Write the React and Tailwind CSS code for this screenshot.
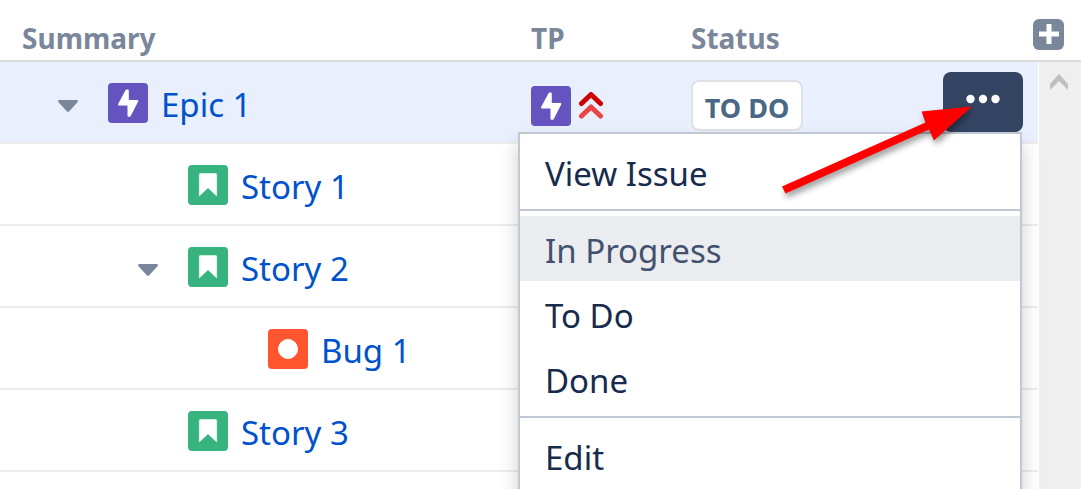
import { useState } from "react";
import clsx from "clsx";

const issues = [
  { id: 1, type: "epic", title: "Epic 1", level: 0, expandable: true, status: "TO DO" },
  { id: 2, type: "story", title: "Story 1", level: 1 },
  { id: 3, type: "story", title: "Story 2", level: 1, expandable: true },
  { id: 4, type: "bug", title: "Bug 1", level: 2 },
  { id: 5, type: "story", title: "Story 3", level: 1 },
];

const menuGroups = [["View Issue"], ["In Progress", "To Do", "Done"], ["Edit"]];

const indents = ["pl-[58px]", "pl-[138px]", "pl-[218px]"];

const typeColors = {
  epic: "bg-[#6554c0]",
  story: "bg-[#36b37e]",
  bug: "bg-[#ff5630]",
};

function TypeIcon({ type }) {
  return (
    <span className={clsx("block size-10 shrink-0 rounded-sm", typeColors[type])}>
      <svg viewBox="0 0 40 40" className="size-10" fill="#fff" stroke="#fff" strokeLinejoin="round">
        {type === "epic" && <path strokeWidth="2" d="M18.5 7.5 11 21.5h9.5v11.2h1.2L29.3 18H19.8V7.5z" />}
        {type === "story" && <path strokeWidth="0.5" d="M12.3 8.5h15.4a1 1 0 0 1 1 1V31L20 22.8 11.3 31V9.5a1 1 0 0 1 1-1z" />}
        {type === "bug" && <circle cx="20" cy="20" r="9.5" strokeWidth="1" />}
      </svg>
    </span>
  );
}

function PriorityIcon() {
  return (
    <svg viewBox="0 0 24 28" className="h-7 w-6" fill="none" strokeWidth="5" strokeLinecap="round" strokeLinejoin="round" role="img" aria-label="Highest priority">
      <path stroke="#ea4444" d="M2.5 24 12 15l9.5 9" />
      <path stroke="#ce0000" d="M2.5 11.5 12 2.5l9.5 9" />
    </svg>
  );
}

function Caret() {
  return (
    <svg viewBox="0 0 20 12" className="h-3 w-5" fill="#7a869a">
      <path d="M1.5 0h17c1.3 0 2 1.3 1 2.3L11 11.4c-.6.6-1.4.6-2 0L.5 2.3C-.5 1.3.2 0 1.5 0z" />
    </svg>
  );
}

function PointerArrow() {
  return (
    <svg
      viewBox="0 0 210 110"
      className="pointer-events-none absolute top-7 -left-[168px] z-20 h-[110px] w-[210px] max-w-none drop-shadow-[2px_4px_3px_rgba(0,0,0,0.4)]"
      fill="#f00"
      aria-hidden="true"
    >
      <path d="M7 86.5 150.5 22.5 146.5 11.5 197 6.5 159 40.5 154 29.5 10.5 93.5z" />
    </svg>
  );
}

function ActionMenu() {
  const [active, setActive] = useState("In Progress");

  return (
    <div
      role="menu"
      className="absolute top-full right-px z-10 w-[504px] border-2 border-[#c1c7d3] bg-white pb-10 shadow-[0_12px_18px_rgba(0,0,0,0.2)]"
    >
      {menuGroups.map((group, index) => (
        <div key={group[0]} role="group" className={clsx("py-[5px]", index > 0 && "border-t-2 border-[#c1c7d3]")}>
          {group.map((label) => (
            <button
              key={label}
              type="button"
              role="menuitem"
              onMouseEnter={() => setActive(label)}
              className={clsx(
                "block h-[65px] w-full px-[25px] pt-1 text-left text-[33px] leading-[61px]",
                label === active ? "bg-[#ebecf0] text-[#42526e]" : "text-[#172b4d]"
              )}
            >
              {label}
            </button>
          ))}
        </div>
      ))}
    </div>
  );
}

function RowActions() {
  const [open, setOpen] = useState(true);

  return (
    <div className="relative ml-auto h-[60px] w-20">
      <button
        type="button"
        aria-label="Issue actions"
        aria-expanded={open}
        onClick={() => setOpen(!open)}
        className="flex size-full justify-center rounded-lg bg-[#344563] pt-[22px]"
      >
        <svg viewBox="0 0 34 10" className="h-[10px] w-[34px]" fill="#fff">
          <circle cx="4.5" cy="5" r="4.2" />
          <circle cx="17" cy="5" r="4.2" />
          <circle cx="29.5" cy="5" r="4.2" />
        </svg>
      </button>
      {open && <ActionMenu />}
      <PointerArrow />
    </div>
  );
}

function IssueRow({ issue, selected, children }) {
  const cell = clsx("h-[82px] border-b-2 border-[#ececec] p-0", selected && "bg-[#e9effc]");

  return (
    <tr>
      <td className={cell}>
        <div className={clsx("flex items-center pt-0.5", indents[issue.level])}>
          <span className="mr-[30px] flex w-5 pt-1.5">
            {issue.expandable && (
              <button type="button" aria-label={`Collapse ${issue.title}`}>
                <Caret />
              </button>
            )}
          </span>
          <TypeIcon type={issue.type} />
          <a href="#" className="ml-[13px] pt-1 text-[33px] leading-9 text-[#0052cc]">
            {issue.title}
          </a>
        </div>
      </td>
      <td className={cell}>
        {selected && (
          <div className="flex items-center gap-2 pt-2">
            <TypeIcon type={issue.type} />
            <PriorityIcon />
          </div>
        )}
      </td>
      <td className={clsx(cell, "pt-1.5")}>
        {issue.status && (
          <span className="block h-[51px] w-28 rounded-lg border-2 border-[#dfe1e6] bg-white pt-1 text-center text-[27px] leading-[43px] font-bold text-[#4a6785]">
            {issue.status}
          </span>
        )}
      </td>
      <td className={clsx(cell, "pr-[15px]")}>{selected && <RowActions />}</td>
      {children}
    </tr>
  );
}

export default function App() {
  const head = "h-[62px] border-b-2 border-[#dcdcdc] p-0 pt-4 text-left text-[28px] leading-10 font-bold text-[#7a869a]";

  return (
    <main className="h-screen overflow-hidden bg-white font-['Noto_Sans','Open_Sans',sans-serif]">
      <table className="w-full table-fixed border-separate border-spacing-0">
        <colgroup>
          <col />
          <col className="w-[160px]" />
          <col className="w-[242px]" />
          <col className="w-[105px]" />
          <col className="w-[43px]" />
        </colgroup>
        <thead>
          <tr>
            <th className={clsx(head, "pl-[22px]")}>Summary</th>
            <th className={head}>TP</th>
            <th className={head}>Status</th>
            <th colSpan={2} className={clsx(head, "pr-[17px]")}>
              <button type="button" aria-label="Add column" className="mb-2 ml-auto flex size-[31px] items-center justify-center rounded-md bg-[#7a869a]">
                <svg viewBox="0 0 20 20" className="size-5" stroke="#fff" strokeWidth="5">
                  <path d="M10 0v20M0 10h20" />
                </svg>
              </button>
            </th>
          </tr>
        </thead>
        <tbody>
          {issues.map((issue, index) => (
            <IssueRow key={issue.id} issue={issue} selected={index === 0}>
              {index === 0 && (
                <td rowSpan={issues.length + 1} className="border-l border-white bg-[#efefef] p-0 pt-3 align-top">
                  <svg viewBox="0 0 18 16" className="ml-[11px] h-4 w-[18px]" fill="#bfbfbf" aria-hidden="true">
                    <path d="M0 10 9 0l9 10v6L9 7l-9 9z" />
                  </svg>
                </td>
              )}
            </IssueRow>
          ))}
          <tr>
            <td colSpan={4} className="h-[82px]" />
          </tr>
        </tbody>
      </table>
    </main>
  );
}
